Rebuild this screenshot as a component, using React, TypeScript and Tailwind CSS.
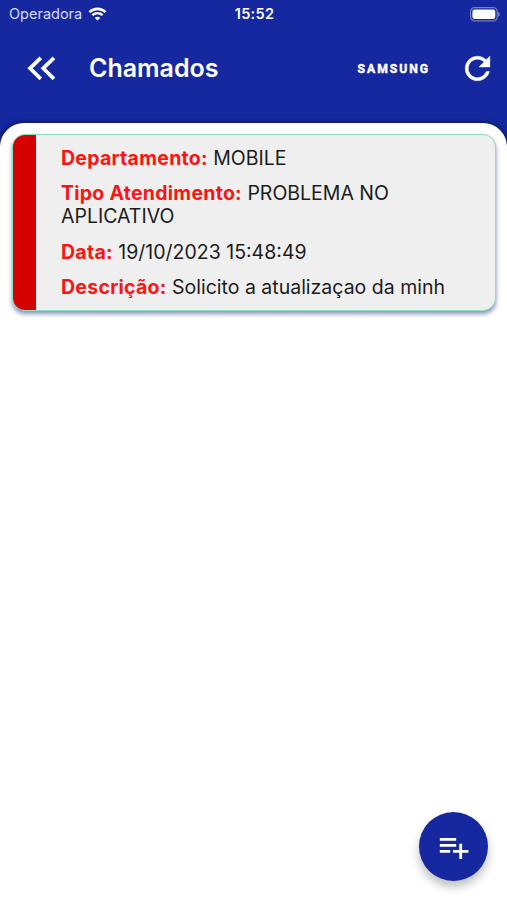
import React from "react";

interface Ticket {
  department: string;
  type: string;
  date: string;
  description: string;
}

const tickets: Ticket[] = [
  {
    department: "MOBILE",
    type: "PROBLEMA NO APLICATIVO",
    date: "19/10/2023 15:48:49",
    description: "Solicito a atualizaçao da minh",
  },
];

function WifiIcon() {
  return (
    <svg viewBox="0 0 18 14" className="w-[19px] h-[14px]" fill="none" stroke="currentColor">
      <path d="M1 5.1C5.6.8 12.4.8 17 5.1" strokeWidth="2.6" />
      <path d="M3.9 8.2c3-2.7 7.2-2.7 10.2 0" strokeWidth="2.4" />
      <path d="M9 13.6 6.3 10.9c1.5-1.4 3.9-1.4 5.4 0z" fill="currentColor" stroke="none" />
    </svg>
  );
}

function BatteryIcon() {
  return (
    <svg viewBox="0 0 30 15" className="w-[30px] h-[15px]">
      <rect x="0.6" y="0.6" width="26.6" height="13.3" rx="4" fill="none" stroke="#fff" strokeOpacity="0.4" strokeWidth="1.2" />
      <rect x="2.4" y="2.6" width="22.9" height="9.4" rx="2.2" fill="#fff" />
      <path d="M28.2 5c1.9.6 1.9 4 0 4.6z" fill="#fff" fillOpacity="0.5" />
    </svg>
  );
}

function BackIcon() {
  return (
    <svg viewBox="0 0 38 38" className="w-[38px] h-[38px]" fill="none" stroke="currentColor" strokeWidth="3.7">
      <path d="M18.8 7.8 8 18.3l10.8 10.5" />
      <path d="M32 7.8 21.2 18.3 32 28.8" />
    </svg>
  );
}

function RefreshIcon() {
  return (
    <svg viewBox="0 0 24 24" className="w-[37px] h-[37px]" fill="currentColor" stroke="currentColor" strokeWidth="0.3">
      <path d="M17.65 6.35A7.96 7.96 0 0 0 12 4a8 8 0 1 0 7.73 10h-2.08A6 6 0 1 1 12 6c1.66 0 3.14.69 4.22 1.78L13 11h7V4z" />
    </svg>
  );
}

function PlaylistAddIcon() {
  return (
    <svg viewBox="0 0 30 24" className="mt-[3px] w-[30px] h-[24px]" fill="none" stroke="currentColor" strokeWidth="2.8">
      <path d="M.8 3.4h16.4M.8 9.4h16.4M.8 15.4h10.4" />
      <path d="M14 15.4h15.4M21.7 7.7v15.4" />
    </svg>
  );
}

function StatusBar() {
  return (
    <div className="grid grid-cols-[1fr_auto_1fr] items-center h-[28px] pl-[9px] pr-[7px]">
      <div className="flex items-center gap-[6px]">
        <span className="text-[14.5px] text-[#d5dbff] leading-none">Operadora</span>
        <WifiIcon />
      </div>
      <span className="text-[14.5px] font-semibold tracking-[0.3px] leading-none">15:52</span>
      <div className="flex justify-end">
        <BatteryIcon />
      </div>
    </div>
  );
}

function Brand() {
  return (
    <svg viewBox="0 0 72 14" className="w-[72px] h-[14px]" role="img" aria-label="Samsung">
      <text
        transform="translate(0.5 11.3) scale(0.9 1)"
        textLength="78.5"
        lengthAdjust="spacing"
        fill="#fff"
        stroke="#fff"
        strokeWidth="0.5"
        className="font-['Roboto',sans-serif] text-[13.5px] font-bold"
      >
        SAMSUNG
      </text>
    </svg>
  );
}

function Field({ label, value }: { label: string; value: string }) {
  return (
    <p>
      <span className="font-bold tracking-[0.26px] text-[#fb1414]">{label}:</span> {value}
    </p>
  );
}

function TicketCard({ ticket }: { ticket: Ticket }) {
  return (
    <div className="flex h-[177px] rounded-[13px] border border-[#8be0bd] bg-[#efefef] overflow-hidden shadow-[0_3px_4px_rgba(21,40,130,0.5)]">
      <div className="w-[23px] shrink-0 bg-[#d50000]" />
      <div className="flex flex-col gap-[12px] pl-[25px] pr-[24px] pt-[11.5px] text-[19.5px] leading-[23.4px] text-[#1c1c1c]">
        <Field label="Departamento" value={ticket.department} />
        <Field label="Tipo Atendimento" value={ticket.type} />
        <Field label="Data" value={ticket.date} />
        <Field label="Descrição" value={ticket.description} />
      </div>
    </div>
  );
}

export default function App() {
  return (
    <div className="relative flex flex-col w-[507px] h-[900px] overflow-hidden bg-white font-['Inter',sans-serif]">
      <header className="h-[145px] shrink-0 bg-[#1528a0] text-white">
        <StatusBar />
        <div className="flex items-center h-[81px] pl-[22px] pr-[11px]">
          <button type="button" aria-label="Voltar">
            <BackIcon />
          </button>
          <h1 className="ml-[29px] text-[25px] font-semibold leading-none">Chamados</h1>
          <div className="ml-auto flex items-center gap-[30px]">
            <Brand />
            <button type="button" aria-label="Atualizar">
              <RefreshIcon />
            </button>
          </div>
        </div>
      </header>

      <main className="relative -mt-[22px] flex-1 rounded-t-[24px] bg-white pl-[12px] pr-[11px] pt-[11px] shadow-[0_0_6px_rgba(0,0,0,0.6)]">
        {tickets.map(ticket => (
          <TicketCard key={ticket.date} ticket={ticket} />
        ))}
      </main>

      <button
        type="button"
        aria-label="Novo chamado"
        className="absolute left-[419px] top-[812px] flex items-center justify-center w-[69px] h-[69px] rounded-full bg-[#1528a0] text-white shadow-[0_6px_10px_rgba(0,0,0,0.25)]"
      >
        <PlaylistAddIcon />
      </button>
    </div>
  );
}
